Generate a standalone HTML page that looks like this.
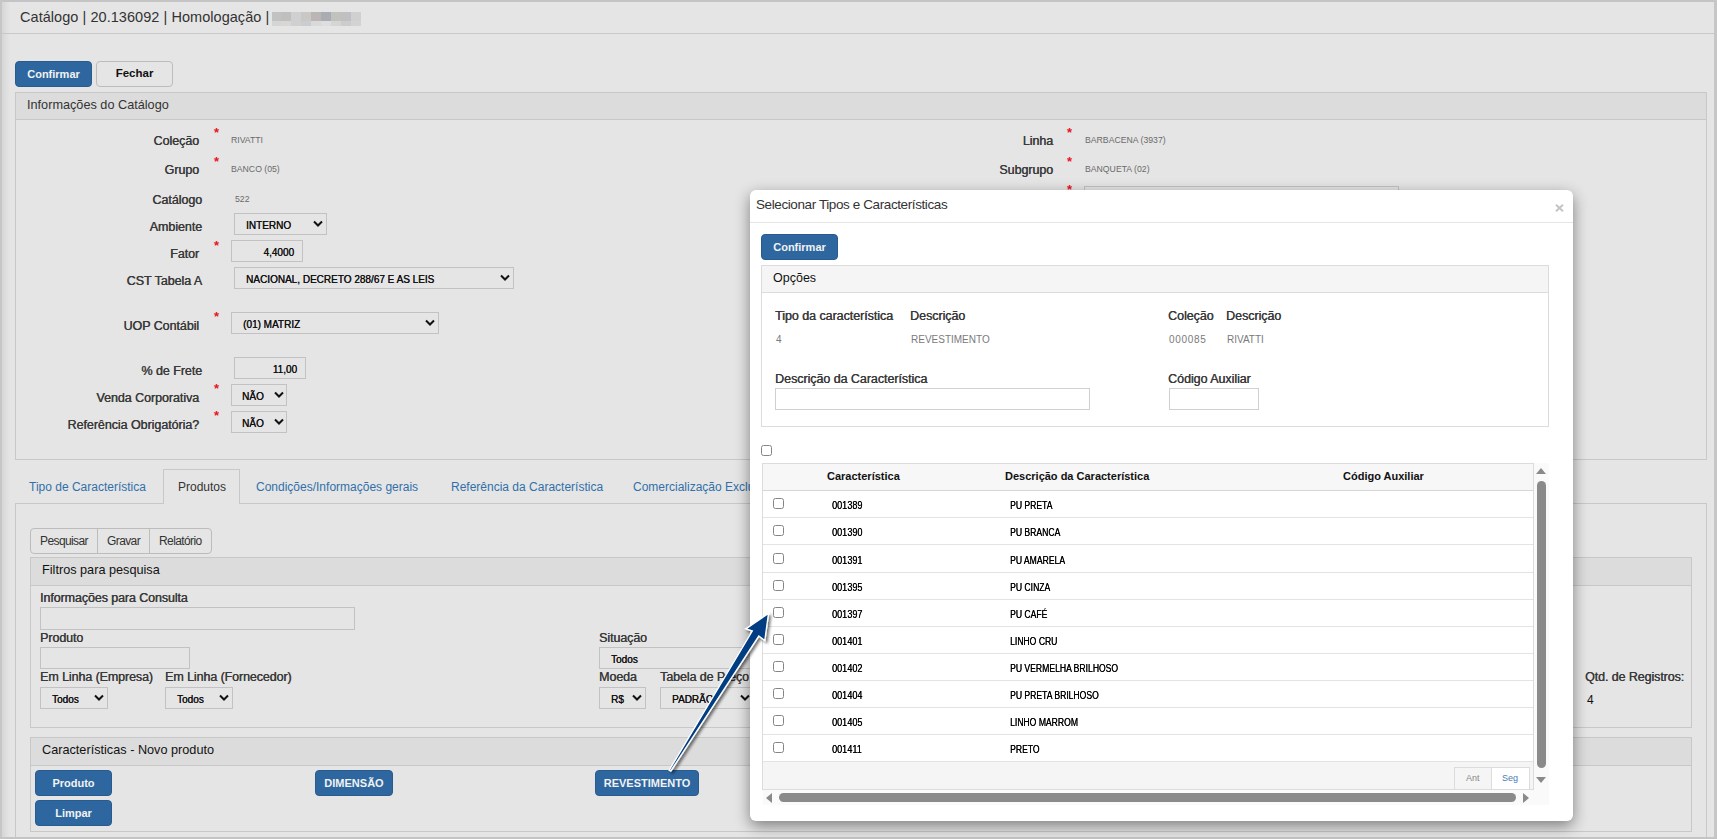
<!DOCTYPE html>
<html><head><meta charset="utf-8">
<style>
*{box-sizing:border-box;margin:0;padding:0}
html,body{width:1717px;height:839px;overflow:hidden}
body{background:#e5e5e5;font-family:"Liberation Sans",sans-serif;position:relative;color:#333}
.a{position:absolute}
.lbl{position:absolute;font-size:12.5px;color:#3a3a3a;text-align:right;white-space:nowrap;line-height:14px;text-shadow:0.35px 0 0 #3a3a3a;letter-spacing:-0.05px}
.ast{position:absolute;color:#e8141b;font-size:13px;font-weight:bold;line-height:10px;margin-top:-1px}
.val{position:absolute;font-size:8.7px;color:#6a6a6a;line-height:10px;white-space:nowrap}
.box{position:absolute;border:1px solid #c2c2c2;background:#e5e5e5}
.sel{position:absolute;border:1px solid #c2c2c2;background:#e5e5e5;font-size:10px;color:#111;white-space:nowrap;line-height:23px;text-shadow:0.3px 0 0 #111}
.chev{position:absolute;top:6px;width:10px;height:8px}
.btnb{position:absolute;background:#2e67a0;border:1px solid #285c8f;border-radius:4px;color:#f2f2f2;font-weight:bold;font-size:11px;text-align:center;line-height:24px}
.panel{position:absolute;border:1px solid #c8c8c8;background:#e5e5e5}
.phead{position:absolute;left:0;right:0;top:0;height:27px;background:#dcdcdc;border-bottom:1px solid #c8c8c8;font-size:12.7px;color:#222;line-height:25px}
.tab{font-size:12px;white-space:nowrap;line-height:14px}
.grp{font-size:12px;color:#333;white-space:nowrap;line-height:14px;letter-spacing:-0.6px}
.flbl{position:absolute;font-size:12.5px;color:#3a3a3a;white-space:nowrap;line-height:14px;text-shadow:0.35px 0 0 #3a3a3a;letter-spacing:-0.1px}
.mlbl{position:absolute;font-size:12.5px;color:#3a3a3a;white-space:nowrap;line-height:14px;text-shadow:0.35px 0 0 #3a3a3a;letter-spacing:-0.05px}
.mval{position:absolute;font-size:10px;color:#7a7a7a;white-space:nowrap;line-height:12px}
.cb{position:absolute;width:11px;height:11px;border:1px solid #858585;border-radius:2.5px;background:#fff}
.th{position:absolute;font-size:11px;color:#111;font-weight:bold;white-space:nowrap;line-height:12px}
.td{position:absolute;font-size:10px;color:#000;white-space:nowrap;line-height:11px;transform-origin:0 0;transform:scaleX(0.91);text-shadow:0.25px 0 0 #000}
</style></head>
<body>
<!-- page frame -->
<div class="a" style="left:0;top:0;width:1717px;height:2px;background:#c4c4c4"></div>
<div class="a" style="left:0;top:0;width:2px;height:839px;background:#c6c6c6"></div>
<div class="a" style="left:2px;top:2px;width:8px;height:837px;background:linear-gradient(90deg,#d6d6d6,#e5e5e5)"></div>
<div class="a" style="left:1714px;top:0;width:3px;height:839px;background:#c6c6c6"></div>
<!-- title bar -->
<div class="a" style="left:2px;top:33px;width:1712px;height:1px;background:#c8c8c8"></div>
<div class="a" style="left:20px;top:9px;font-size:14.5px;color:#333;white-space:nowrap;line-height:16px;letter-spacing:0.05px">Catálogo | 20.136092 | Homologação |</div>
<div class="a" style="left:272px;top:12px;width:9px;height:9px;background:#c2c2c2"></div>
<div class="a" style="left:272px;top:21px;width:9px;height:5px;background:#d5d5d5"></div>
<div class="a" style="left:281px;top:12px;width:10px;height:9px;background:#c0bfbe"></div>
<div class="a" style="left:281px;top:21px;width:10px;height:5px;background:#d8d7d5"></div>
<div class="a" style="left:291px;top:12px;width:10px;height:9px;background:#cfd0d2"></div>
<div class="a" style="left:291px;top:21px;width:10px;height:5px;background:#d0d0d0"></div>
<div class="a" style="left:301px;top:12px;width:10px;height:9px;background:#c9c8c5"></div>
<div class="a" style="left:301px;top:21px;width:10px;height:5px;background:#cbcccf"></div>
<div class="a" style="left:311px;top:12px;width:10px;height:9px;background:#bbb6b5"></div>
<div class="a" style="left:311px;top:21px;width:10px;height:5px;background:#d9d9d9"></div>
<div class="a" style="left:321px;top:12px;width:10px;height:9px;background:#a9adb1"></div>
<div class="a" style="left:321px;top:21px;width:10px;height:5px;background:#dedede"></div>
<div class="a" style="left:331px;top:12px;width:10px;height:9px;background:#c0c2bd"></div>
<div class="a" style="left:331px;top:21px;width:10px;height:5px;background:#d5d5d5"></div>
<div class="a" style="left:341px;top:12px;width:10px;height:9px;background:#c0bfc3"></div>
<div class="a" style="left:341px;top:21px;width:10px;height:5px;background:#cccccc"></div>
<div class="a" style="left:351px;top:12px;width:10px;height:9px;background:#d0d0d0"></div>
<div class="a" style="left:351px;top:21px;width:10px;height:5px;background:#d2d3d5"></div>

<!-- top buttons -->
<div class="btnb" style="left:15px;top:61px;width:77px;height:26px">Confirmar</div>
<div class="a" style="left:96px;top:61px;width:77px;height:26px;border:1px solid #bcbcbc;border-radius:4px;background:#e5e5e5;font-weight:bold;font-size:11.5px;color:#111;text-align:center;line-height:23px">Fechar</div>

<!-- Informações do Catálogo panel -->
<div class="panel" style="left:15px;top:92px;width:1692px;height:368px">
  <div class="phead" style="padding-left:11px;color:#333">Informações do Catálogo</div>
</div>

<!--FORM-->
<div class="lbl" style="right:1518px;top:134px">Coleção</div>
<div class="ast" style="left:214px;top:129px">*</div>
<div class="val" style="left:231px;top:135px">RIVATTI</div>
<div class="lbl" style="right:1518px;top:163px">Grupo</div>
<div class="ast" style="left:214px;top:158px">*</div>
<div class="val" style="left:231px;top:164px">BANCO (05)</div>
<div class="lbl" style="right:1515px;top:193px">Catálogo</div>
<div class="val" style="left:235px;top:194px">522</div>
<div class="lbl" style="right:1515px;top:220px">Ambiente</div>
<div class="sel" style="left:234px;top:213px;width:93px;height:22px;padding-left:11px">INTERNO<svg class="chev" style="right:3px" viewBox="0 0 10 8"><path d="M1 1.5 L5 5.5 L9 1.5" fill="none" stroke="#111" stroke-width="2"/></svg></div>
<div class="lbl" style="right:1518px;top:247px">Fator</div>
<div class="ast" style="left:214px;top:242px">*</div>
<div class="sel" style="left:231px;top:240px;width:72px;height:22px;text-align:right;padding-right:8px">4,4000</div>
<div class="lbl" style="right:1515px;top:274px">CST Tabela A</div>
<div class="sel" style="left:234px;top:267px;width:280px;height:22px;padding-left:11px">NACIONAL, DECRETO 288/67 E AS LEIS<svg class="chev" style="right:3px" viewBox="0 0 10 8"><path d="M1 1.5 L5 5.5 L9 1.5" fill="none" stroke="#111" stroke-width="2"/></svg></div>
<div class="lbl" style="right:1518px;top:319px">UOP Contábil</div>
<div class="ast" style="left:214px;top:313px">*</div>
<div class="sel" style="left:231px;top:312px;width:208px;height:22px;padding-left:11px">(01) MATRIZ<svg class="chev" style="right:3px" viewBox="0 0 10 8"><path d="M1 1.5 L5 5.5 L9 1.5" fill="none" stroke="#111" stroke-width="2"/></svg></div>
<div class="lbl" style="right:1515px;top:364px">% de Frete</div>
<div class="sel" style="left:234px;top:357px;width:72px;height:22px;text-align:right;padding-right:8px">11,00</div>
<div class="lbl" style="right:1518px;top:391px">Venda Corporativa</div>
<div class="ast" style="left:214px;top:385px">*</div>
<div class="sel" style="left:231px;top:384px;width:56px;height:22px;padding-left:10px">NÃO<svg class="chev" style="right:2px" viewBox="0 0 10 8"><path d="M1 1.5 L5 5.5 L9 1.5" fill="none" stroke="#111" stroke-width="2"/></svg></div>
<div class="lbl" style="right:1518px;top:418px">Referência Obrigatória?</div>
<div class="ast" style="left:214px;top:412px">*</div>
<div class="sel" style="left:231px;top:411px;width:56px;height:22px;padding-left:10px">NÃO<svg class="chev" style="right:2px" viewBox="0 0 10 8"><path d="M1 1.5 L5 5.5 L9 1.5" fill="none" stroke="#111" stroke-width="2"/></svg></div>
<div class="lbl" style="right:664px;top:134px">Linha</div>
<div class="ast" style="left:1067px;top:129px">*</div>
<div class="val" style="left:1085px;top:135px">BARBACENA (3937)</div>
<div class="lbl" style="right:664px;top:163px">Subgrupo</div>
<div class="ast" style="left:1067px;top:158px">*</div>
<div class="val" style="left:1085px;top:164px">BANQUETA (02)</div>
<div class="ast" style="left:1067px;top:186px">*</div>
<div class="box" style="left:1084px;top:186px;width:315px;height:22px"></div>
<!--/FORM-->
<!--LOWER-->
<div class="a" style="left:15px;top:503px;width:1692px;height:340px;border:1px solid #c8c8c8;background:#e5e5e5"></div>
<div class="a" style="left:163px;top:469px;width:77px;height:35px;border:1px solid #c8c8c8;border-bottom:none;background:#e5e5e5"></div>
<div class="a tab" style="left:29px;top:480px;color:#3170aa">Tipo de Característica</div>
<div class="a tab" style="left:178px;top:480px;color:#333">Produtos</div>
<div class="a tab" style="left:256px;top:480px;color:#3170aa">Condições/Informações gerais</div>
<div class="a tab" style="left:451px;top:480px;color:#3170aa">Referência da Característica</div>
<div class="a tab" style="left:633px;top:480px;color:#3170aa">Comercialização Exclusiva</div>
<div class="a" style="left:30px;top:528px;width:182px;height:26px;border:1px solid #bcbcbc;border-radius:4px"></div>
<div class="a" style="left:97px;top:528px;width:1px;height:26px;background:#bcbcbc"></div>
<div class="a" style="left:149px;top:528px;width:1px;height:26px;background:#bcbcbc"></div>
<div class="a grp" style="left:40px;top:534px">Pesquisar</div>
<div class="a grp" style="left:107px;top:534px">Gravar</div>
<div class="a grp" style="left:159px;top:534px">Relatório</div>
<div class="panel" style="left:30px;top:557px;width:1662px;height:171px"><div class="phead" style="padding-left:11px;color:#111;height:28px;line-height:25px">Filtros para pesquisa</div></div>
<div class="flbl" style="left:40px;top:591px">Informações para Consulta</div>
<div class="box" style="left:40px;top:607px;width:315px;height:23px"></div>
<div class="flbl" style="left:40px;top:631px">Produto</div>
<div class="box" style="left:40px;top:647px;width:150px;height:22px"></div>
<div class="flbl" style="left:40px;top:670px">Em Linha (Empresa)</div>
<div class="sel" style="left:40px;top:687px;width:68px;height:22px;padding-left:11px">Todos<svg class="chev" style="right:3px" viewBox="0 0 10 8"><path d="M1 1.5 L5 5.5 L9 1.5" fill="none" stroke="#111" stroke-width="2"/></svg></div>
<div class="flbl" style="left:165px;top:670px">Em Linha (Fornecedor)</div>
<div class="sel" style="left:165px;top:687px;width:68px;height:22px;padding-left:11px">Todos<svg class="chev" style="right:3px" viewBox="0 0 10 8"><path d="M1 1.5 L5 5.5 L9 1.5" fill="none" stroke="#111" stroke-width="2"/></svg></div>
<div class="flbl" style="left:599px;top:631px">Situação</div>
<div class="sel" style="left:599px;top:647px;width:200px;height:22px;padding-left:11px">Todos</div>
<div class="flbl" style="left:599px;top:670px">Moeda</div>
<div class="sel" style="left:599px;top:687px;width:47px;height:22px;padding-left:11px">R$<svg class="chev" style="right:3px" viewBox="0 0 10 8"><path d="M1 1.5 L5 5.5 L9 1.5" fill="none" stroke="#111" stroke-width="2"/></svg></div>
<div class="flbl" style="left:660px;top:670px">Tabela de Preço</div>
<div class="sel" style="left:660px;top:687px;width:120px;height:22px;padding-left:11px">PADRÃO<svg class="chev" style="right:29px" viewBox="0 0 10 8"><path d="M1 1.5 L5 5.5 L9 1.5" fill="none" stroke="#111" stroke-width="2"/></svg></div>
<div class="flbl" style="left:1585px;top:670px">Qtd. de Registros:</div>
<div class="a" style="left:1587px;top:694px;font-size:12px;color:#111;line-height:13px">4</div>
<div class="panel" style="left:30px;top:737px;width:1662px;height:95px"><div class="phead" style="padding-left:11px;color:#111;height:28px;line-height:25px">Características - Novo produto</div></div>
<div class="btnb" style="left:35px;top:770px;width:77px;height:26px">Produto</div>
<div class="btnb" style="left:35px;top:800px;width:77px;height:26px">Limpar</div>
<div class="btnb" style="left:315px;top:770px;width:78px;height:26px">DIMENSÃO</div>
<div class="btnb" style="left:595px;top:770px;width:104px;height:26px">REVESTIMENTO</div>
<div class="a" style="left:0;top:837px;width:1717px;height:2px;background:#c4c4c4"></div>
<!--/LOWER-->
<!--MODAL-->
<div class="a" id="modal" style="left:750px;top:190px;width:823px;height:631px;background:#fff;border-radius:6px;box-shadow:0 5px 15px rgba(0,0,0,.45)">
<div class="a" style="left:6px;top:7px;font-size:13.5px;color:#333;line-height:16px;white-space:nowrap;letter-spacing:-0.4px">Selecionar Tipos e Características</div>
<svg class="a" style="left:805px;top:14px" width="9" height="8" viewBox="0 0 9 8"><path d="M1 0.8 L8 7.2 M8 0.8 L1 7.2" stroke="#c4c4c4" stroke-width="2"/></svg>
<div class="a" style="left:0;top:32px;width:823px;height:1px;background:#e5e5e5"></div>
<div class="btnb" style="left:11px;top:44px;width:77px;height:26px">Confirmar</div>
<div class="a" style="left:11px;top:75px;width:788px;height:162px;border:1px solid #dcdcdc"><div class="a" style="left:0;top:0;width:786px;height:27px;background:#f5f5f5;border-bottom:1px solid #dcdcdc;font-size:12.5px;color:#111;padding-left:11px;line-height:24px">Opções</div></div>
<div class="mlbl" style="left:25px;top:119px">Tipo da característica</div>
<div class="mlbl" style="left:160px;top:119px">Descrição</div>
<div class="mlbl" style="left:418px;top:119px">Coleção</div>
<div class="mlbl" style="left:476px;top:119px">Descrição</div>
<div class="mval" style="left:26px;top:144px">4</div>
<div class="mval" style="left:161px;top:144px">REVESTIMENTO</div>
<div class="mval" style="left:419px;top:144px;letter-spacing:0.7px">000085</div>
<div class="mval" style="left:477px;top:144px">RIVATTI</div>
<div class="mlbl" style="left:25px;top:182px">Descrição da Característica</div>
<div class="mlbl" style="left:418px;top:182px">Código Auxiliar</div>
<div class="a" style="left:25px;top:198px;width:315px;height:22px;border:1px solid #d0d0d0"></div>
<div class="a" style="left:419px;top:198px;width:90px;height:22px;border:1px solid #d0d0d0"></div>
<div class="cb" style="left:11px;top:255px"></div>
<div class="a" style="left:12px;top:273px;width:772px;height:327px;border:1px solid #dcdcdc;background:#fff"></div>
<div class="a" style="left:13px;top:274px;width:770px;height:27px;background:#f7f7f7;border-bottom:1px solid #d6d6d6"></div>
<div class="th" style="left:77px;top:280px">Característica</div>
<div class="th" style="left:255px;top:280px">Descrição da Característica</div>
<div class="th" style="left:593px;top:280px">Código Auxiliar</div>
<div class="a" style="left:13px;top:327px;width:770px;height:1px;background:#e3e3e3"></div>
<div class="cb" style="left:23px;top:308px"></div>
<div class="td" style="left:82px;top:310px">001389</div>
<div class="td" style="transform:scaleX(0.86);left:260px;top:310px">PU PRETA</div>
<div class="a" style="left:13px;top:354px;width:770px;height:1px;background:#e3e3e3"></div>
<div class="cb" style="left:23px;top:335px"></div>
<div class="td" style="left:82px;top:337px">001390</div>
<div class="td" style="transform:scaleX(0.86);left:260px;top:337px">PU BRANCA</div>
<div class="a" style="left:13px;top:382px;width:770px;height:1px;background:#e3e3e3"></div>
<div class="cb" style="left:23px;top:363px"></div>
<div class="td" style="left:82px;top:365px">001391</div>
<div class="td" style="transform:scaleX(0.86);left:260px;top:365px">PU AMARELA</div>
<div class="a" style="left:13px;top:409px;width:770px;height:1px;background:#e3e3e3"></div>
<div class="cb" style="left:23px;top:390px"></div>
<div class="td" style="left:82px;top:392px">001395</div>
<div class="td" style="transform:scaleX(0.86);left:260px;top:392px">PU CINZA</div>
<div class="a" style="left:13px;top:436px;width:770px;height:1px;background:#e3e3e3"></div>
<div class="cb" style="left:23px;top:417px"></div>
<div class="td" style="left:82px;top:419px">001397</div>
<div class="td" style="transform:scaleX(0.86);left:260px;top:419px">PU CAFÉ</div>
<div class="a" style="left:13px;top:463px;width:770px;height:1px;background:#e3e3e3"></div>
<div class="cb" style="left:23px;top:444px"></div>
<div class="td" style="left:82px;top:446px">001401</div>
<div class="td" style="transform:scaleX(0.86);left:260px;top:446px">LINHO CRU</div>
<div class="a" style="left:13px;top:490px;width:770px;height:1px;background:#e3e3e3"></div>
<div class="cb" style="left:23px;top:471px"></div>
<div class="td" style="left:82px;top:473px">001402</div>
<div class="td" style="transform:scaleX(0.86);left:260px;top:473px">PU VERMELHA BRILHOSO</div>
<div class="a" style="left:13px;top:517px;width:770px;height:1px;background:#e3e3e3"></div>
<div class="cb" style="left:23px;top:498px"></div>
<div class="td" style="left:82px;top:500px">001404</div>
<div class="td" style="transform:scaleX(0.86);left:260px;top:500px">PU PRETA BRILHOSO</div>
<div class="a" style="left:13px;top:544px;width:770px;height:1px;background:#e3e3e3"></div>
<div class="cb" style="left:23px;top:525px"></div>
<div class="td" style="left:82px;top:527px">001405</div>
<div class="td" style="transform:scaleX(0.86);left:260px;top:527px">LINHO MARROM</div>
<div class="a" style="left:13px;top:571px;width:770px;height:1px;background:#e3e3e3"></div>
<div class="cb" style="left:23px;top:552px"></div>
<div class="td" style="left:82px;top:554px">001411</div>
<div class="td" style="transform:scaleX(0.86);left:260px;top:554px">PRETO</div>
<div class="a" style="left:13px;top:572px;width:770px;height:27px;background:#f5f5f5"></div>
<div class="a" style="left:704px;top:577px;width:76px;height:22px;border:1px solid #dcdcdc;border-bottom:none;background:#f5f5f5"></div>
<div class="a" style="left:741px;top:578px;width:38px;height:21px;border-left:1px solid #dcdcdc;background:#fff"></div>
<div class="a" style="left:716px;top:582px;font-size:9px;color:#888;line-height:12px">Ant</div>
<div class="a" style="left:752px;top:582px;font-size:9px;color:#4a7ab8;line-height:12px">Seg</div>
<div class="a" style="left:784px;top:273px;width:15px;height:342px;background:#fafafa"></div>
<div class="a" style="left:13px;top:600px;width:786px;height:15px;background:#fafafa"></div>
<div class="a" style="left:787px;top:291px;width:9px;height:287px;border-radius:5px;background:#8a8a8a"></div>
<svg class="a" style="left:786px;top:278px" width="10" height="6"><path d="M0 6 L5 0 L10 6Z" fill="#8a8a8a"/></svg>
<svg class="a" style="left:786px;top:587px" width="10" height="6"><path d="M0 0 L5 6 L10 0Z" fill="#8a8a8a"/></svg>
<div class="a" style="left:29px;top:603px;width:737px;height:9px;border-radius:5px;background:#8a8a8a"></div>
<svg class="a" style="left:16px;top:603px" width="6" height="10"><path d="M6 0 L0 5 L6 10Z" fill="#8a8a8a"/></svg>
<svg class="a" style="left:773px;top:603px" width="6" height="10"><path d="M0 0 L6 5 L0 10Z" fill="#8a8a8a"/></svg>
</div>
<!--/MODAL-->
<!--ARROW-->
<svg class="a" style="left:0;top:0" width="1717" height="839" viewBox="0 0 1717 839">
<defs><filter id="sh" x="-20%" y="-20%" width="140%" height="140%"><feGaussianBlur in="SourceAlpha" stdDeviation="1.8"/><feOffset dx="1.5" dy="2"/><feComponentTransfer><feFuncA type="linear" slope="0.55"/></feComponentTransfer><feMerge><feMergeNode/><feMergeNode in="SourceGraphic"/></feMerge></filter></defs>
<path filter="url(#sh)" d="M768.5 613.5 L764.8 640.5 L758.8 636 L670.8 771 L669.2 770.2 L752.3 631 L745.8 628.8 Z" fill="#003d82" stroke="#fff" stroke-width="1.4" stroke-linejoin="miter"/>
</svg>
<!--/ARROW-->
</body></html>
